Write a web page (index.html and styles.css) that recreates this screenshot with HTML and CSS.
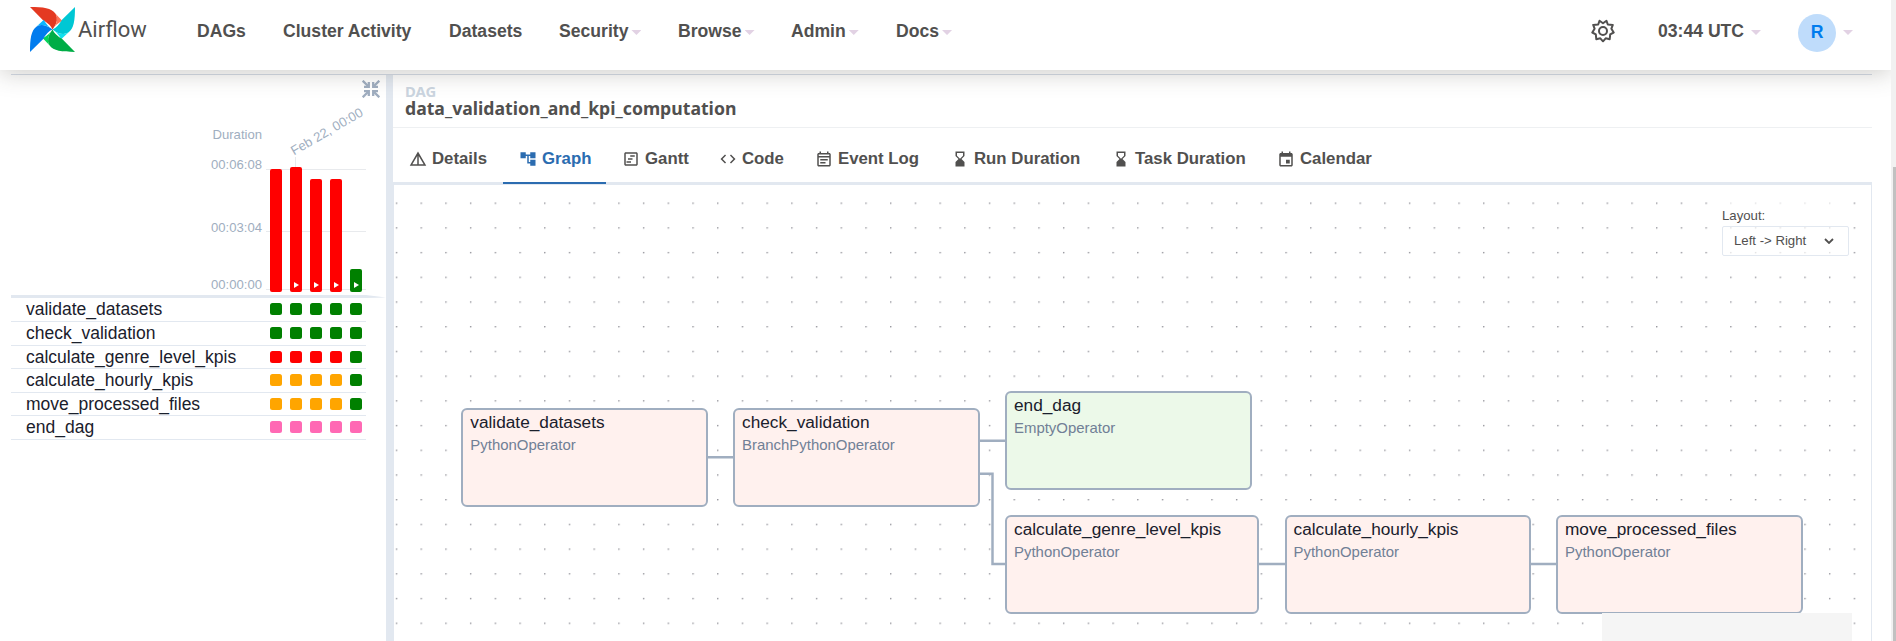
FILE: index.html
```html
<!DOCTYPE html>
<html lang="en">
<head>
<meta charset="utf-8">
<title>data_validation_and_kpi_computation - Airflow</title>
<link rel="stylesheet" href="styles.css">
</head>
<body>
<div class="page">
<header class="navbar">
  <a class="brand">
    <svg class="pinwheel" viewBox="0 0 44 44">
      <defs>
        <path id="blade" d="M0 0C13 0 21 1 25 6.500Q29 13 22 22Q20 17 12.500 12.700Z"/>
        <path id="fold" d="M25 6.500L31.500 13.500Q25 17 22 22Q29 13 25 6.500Z"/>
      </defs>
      <g fill="#e43921"><use href="#blade"/><use href="#fold" fill="#ff7557"/></g>
      <g fill="#00c7d4" transform="rotate(90 22 22)"><use href="#blade"/><use href="#fold" fill="#11e1ee"/></g>
      <g fill="#00ad46" transform="rotate(180 22 22)"><use href="#blade"/><use href="#fold" fill="#04d659"/></g>
      <g fill="#017cee" transform="rotate(270 22 22)"><use href="#blade"/><use href="#fold" fill="#0cb6ff"/></g>
    </svg>
    <span class="wordmark">Airflow</span>
  </a>
  <nav class="menu">
    <a class="m1">DAGs</a><a class="m2">Cluster Activity</a><a class="m3">Datasets</a>
    <a class="m4">Security<i class="caret"></i></a><a class="m5">Browse<i class="caret"></i></a><a class="m6">Admin<i class="caret"></i></a><a>Docs<i class="caret"></i></a>
  </nav>
  <div class="account">
    <svg class="gear" viewBox="0 0 24 24"><path d="M12 4.300L15.500 1.800L16.800 5.500L21.800 5.900L20.400 9.700L22.700 13.500L19.200 15.300L18.700 20.200L14.700 19.300L12 22.300L9.300 19.300L5.300 20.200L4.800 15.300L1.300 13.500L3.600 9.700L2.200 5.900L7.200 5.500L8.500 1.800Z"/><circle cx="12" cy="12" r="4"/></svg>
    <span class="clock">03:44 UTC</span><i class="caret"></i>
    <span class="avatar">R</span><i class="caret"></i>
  </div>
</header>
<main class="content">
  <section class="grid-panel">
    <div class="toolbar">
      <svg class="collapse" viewBox="0 0 18 18"><g fill="none" stroke="#a0aec0" stroke-width="2.300"><path d="M.700 .700L6.500 6.500M17.300 .700L11.500 6.500M.700 17.300L6.500 11.500M17.300 17.300L11.500 11.500"/><path d="M2 6.800H6.800V2M11.200 2V6.800H16M2 11.200H6.800V16M11.200 16V11.200H16"/></g></svg>
    </div>
    <div class="chart">
      <div class="axis"><span class="a0">Duration</span><span class="a1">00:06:08</span><span class="a2">00:03:04</span><span class="a3">00:00:00</span></div>
      <div class="bars">
        <span class="run-date">Feb 22, 00:00</span><i class="tick"></i>
        <i class="rule r1"></i><i class="rule r2"></i><i class="rule r3"></i>
        <div class="bar red" style="height:123px"></div>
        <div class="bar red manual" style="height:125px"></div>
        <div class="bar red manual" style="height:113px"></div>
        <div class="bar red manual" style="height:113px"></div>
        <div class="bar green manual" style="height:23px"></div>
      </div>
    </div>
    <svg class="edge" viewBox="0 0 375 3"><path d="M0 0H355L375 2.500L355 3H0Z"/></svg>
    <div class="task tall"><span>validate_datasets</span><i class="green"></i><i class="green"></i><i class="green"></i><i class="green"></i><i class="green"></i></div>
    <div class="task tall"><span>check_validation</span><i class="green"></i><i class="green"></i><i class="green"></i><i class="green"></i><i class="green"></i></div>
    <div class="task"><span>calculate_genre_level_kpis</span><i class="red"></i><i class="red"></i><i class="red"></i><i class="red"></i><i class="green"></i></div>
    <div class="task tall"><span>calculate_hourly_kpis</span><i class="orange"></i><i class="orange"></i><i class="orange"></i><i class="orange"></i><i class="green"></i></div>
    <div class="task"><span>move_processed_files</span><i class="orange"></i><i class="orange"></i><i class="orange"></i><i class="orange"></i><i class="green"></i></div>
    <div class="task tall"><span>end_dag</span><i class="pink"></i><i class="pink"></i><i class="pink"></i><i class="pink"></i><i class="pink"></i></div>
  </section>
  <div class="splitter"></div>
  <section class="details">
    <div class="heading"><div class="kind">DAG</div><h1>data_validation_and_kpi_computation</h1></div>
    <div class="tabs">
      <a class="t1"><svg viewBox="0 0 24 24"><path d="M12 2 1 21h22zm1 5.920L19.530 19H13v-3h-2v3H4.470L11 7.920V16h2z"/></svg>Details</a>
      <a class="t2 active"><svg viewBox="0 0 24 24"><path d="M22 11V3h-7v3H9V3H2v8h7V8h2v10h4v3h7v-8h-7v3h-2V8h2v3z"/></svg>Graph</a>
      <a class="t3"><svg viewBox="0 0 24 24"><path d="M19 5v14H5V5h14m0-2H5c-1.100 0-2 .9-2 2v14c0 1.100.9 2 2 2h14c1.100 0 2-.9 2-2V5c0-1.100-.9-2-2-2z"/><path d="M11 7h6v2h-6zM8 11h6v2H8zM6 15h6v2H6z"/></svg>Gantt</a>
      <a class="t4"><svg viewBox="0 0 24 24"><path d="M9.400 16.600 4.800 12l4.600-4.600L8 6l-6 6 6 6zm5.200 0 4.600-4.600-4.600-4.600L16 6l6 6-6 6z"/></svg>Code</a>
      <a class="t5"><svg viewBox="0 0 24 24"><path d="M19 4h-1V2h-2v2H8V2H6v2H5c-1.110 0-2 .9-2 2v14c0 1.100.89 2 2 2h14c1.100 0 2-.9 2-2V6c0-1.100-.9-2-2-2zm0 16H5V10h14zm0-12H5V6h14zM7 12h10v2H7zm0 4h7v2H7z"/></svg>Event Log</a>
      <a class="t6"><svg viewBox="0 0 24 24"><path d="m18 22-.010-6L14 12l3.990-4.010L18 2H6v6l4 4-4 3.990V22zM8 7.500V4h8v3.500l-4 4z"/></svg>Run Duration</a>
      <a class="t7"><svg viewBox="0 0 24 24"><path d="m18 22-.010-6L14 12l3.990-4.010L18 2H6v6l4 4-4 3.990V22zM8 7.500V4h8v3.500l-4 4z"/></svg>Task Duration</a>
      <a class="t8"><svg viewBox="0 0 24 24"><path d="M19 4h-1V2h-2v2H8V2H6v2H5c-1.110 0-1.990.9-1.990 2L3 20c0 1.100.89 2 2 2h14c1.100 0 2-.9 2-2V6c0-1.100-.9-2-2-2zm0 16H5V9h14zm-7-7h5v5h-5z"/></svg>Calendar</a>
    </div>
    <div class="graph">
      <svg class="canvas" width="1477" height="456">
        <defs><pattern id="dots" x="1.800" y="17.500" width="24.710" height="24.710" patternUnits="userSpaceOnUse"><circle cx=".8" cy=".8" r=".700" fill="#71717a"/></pattern></defs>
        <rect width="1477" height="456" fill="url(#dots)"/>
        <g fill="none" stroke="#a0aec0" stroke-width="2.470"><path d="M313 272.300H340M585 255.700H612M585 288.800H598.500V379H612M865 379H891M1136 379H1163"/></g>
      </svg>
      <div class="node n1"><b>validate_datasets</b><span>PythonOperator</span></div>
      <div class="node n2"><b>check_validation</b><span>BranchPythonOperator</span></div>
      <div class="node n3 empty"><b>end_dag</b><span>EmptyOperator</span></div>
      <div class="node n4"><b>calculate_genre_level_kpis</b><span>PythonOperator</span></div>
      <div class="node n5"><b>calculate_hourly_kpis</b><span>PythonOperator</span></div>
      <div class="node n6"><b>move_processed_files</b><span>PythonOperator</span></div>
      <div class="layout"><label>Layout:</label><div class="select">Left -&gt; Right<svg viewBox="0 0 10 6"><path d="M1 1l4 4 4-4"/></svg></div></div>
      <div class="minimap"></div>
    </div>
  </section>
</main>
</div>
<div class="scrollbar"><div class="thumb"></div></div>
</body>
</html>
```

FILE: styles.css
```css
* { box-sizing: border-box; }
body { margin: 0; height: 641px; overflow: hidden; display: flex; background: #fff; color: #51504f; font-family: "Liberation Sans", Arial, sans-serif; }
.page { width: 1891px; height: 641px; overflow: hidden; display: flex; flex-direction: column; }
.scrollbar { width: 5px; background: #f1f1f1; padding: 167px 0 0 2px; }
.thumb { height: 474px; background: #c1c1c1; }

.navbar { position: relative; z-index: 2; flex: none; height: 70px; background: #fff; display: flex; align-items: flex-start; box-shadow: 0 3px 22px rgba(60, 55, 45, .25); font-weight: bold; font-size: 17.6px; line-height: 20px; }
.brand { display: flex; width: 197px; padding: 7px 0 0 30px; }
.pinwheel { width: 45px; height: 45px; flex: none; }
.wordmark { font: 400 22px/26px Roboto, sans-serif; padding: 10px 0 0 3px; }
.menu { display: flex; padding-top: 21px; flex: 1; }
.menu a { display: flex; white-space: nowrap; }
.m1 { width: 86px; }
.m2 { width: 166px; }
.m3 { width: 110px; }
.m4 { width: 119px; }
.m5 { width: 113px; }
.m6 { width: 105px; }
.caret { flex: none; width: 10px; height: 5px; margin: 9px 0 0 3px; background: #e2d2e4; clip-path: polygon(0 0, 100% 0, 50% 100%); }
.account { display: flex; width: 300px; padding: 14px 0 0 0; }
.gear { width: 24px; height: 24px; margin: 5px 43px 0 0; fill: none; stroke: #51504f; stroke-width: 2; stroke-linejoin: round; }
.clock { padding-top: 7px; width: 90px; white-space: nowrap; }
.account .caret { margin: 16px 0 0 3px; }
.avatar { width: 38px; height: 38px; margin-left: 37px; border-radius: 50%; background: #bfdcfb; color: #017cee; text-align: center; line-height: 36px; }
.avatar + .caret { margin-left: 7px; }

.content { display: flex; width: 1861px; height: 567px; margin: 4px 0 0 11px; border-top: 1px solid #d6dde8; }
.grid-panel { width: 375px; flex: none; }
.toolbar { height: 35px; padding: 5px 0 0 351px; }
.collapse { width: 18px; height: 18px; display: block; }
.chart { display: flex; height: 184px; }
.axis { width: 251px; text-align: right; color: #a0aec0; font-size: 13.1px; line-height: 16px; display: flex; flex-direction: column; }
.a0 { margin-top: 17px; }
.a1 { margin-top: 14px; }
.a2 { margin-top: 47px; }
.a3 { margin-top: 41px; }
.bars { position: relative; width: 115px; padding: 0 0 2px 8px; display: flex; align-items: flex-end; gap: 8px; }
.bar { position: relative; width: 12px; border-radius: 2px; }
.manual::after { content: ""; position: absolute; left: 4px; bottom: 4px; width: 5px; height: 6px; background: #fff; clip-path: polygon(0 0, 100% 50%, 0 100%); }
.red { background: #f00; }
.green { background: #008000; }
.orange { background: #ffa500; }
.pink { background: #ff69b4; }
.rule { position: absolute; left: 4px; width: 100px; height: 1px; background: #e8eaed; }
.r1 { top: 59px; }
.r2 { top: 121px; }
.r3 { top: 179px; }
.tick { position: absolute; left: 33px; top: 47px; width: 1px; height: 12px; background: #e8eaed; }
.run-date { position: absolute; left: 34px; top: 33px; color: #a0aec0; font-size: 13.1px; line-height: 16px; white-space: nowrap; transform: rotate(-30deg); transform-origin: 0 100%; }
.edge { display: block; width: 375px; height: 3px; fill: #e2e8f0; margin-top: 1px; }
.task { display: flex; align-items: center; gap: 8px; width: 355px; height: 23px; border-bottom: 1px solid #e2e8f0; font-size: 17.5px; line-height: 20px; color: #1a202c; padding-left: 15px; }
.tall { height: 24px; padding-bottom: 1px; }
.task span { width: 236px; }
.task i { width: 12px; height: 12px; border-radius: 2.500px; }
.splitter { width: 7px; background: #e2e8f0; flex: none; }
.details { flex: 1; min-width: 0; display: flex; flex-direction: column; }
.heading { height: 53px; border-bottom: 1px solid #eef0f2; padding: 7px 0 0 12px; font-family: "Noto Sans", sans-serif; font-weight: bold; }
.kind { font-size: 14.8px; line-height: 18px; color: #cbd5e0; }
h1 { margin: 0; font-size: 17.65px; line-height: 17px; }
.tabs { display: flex; height: 57px; border-bottom: 3px solid #e2e8f0; font-size: 16.8px; font-weight: bold; }
.tabs a { display: flex; align-items: center; height: 56px; padding: 6px 0 0 16px; gap: 5px; white-space: nowrap; flex: none; }
.tabs svg { width: 18px; height: 18px; fill: currentColor; }
.t1 { width: 110px; }
.t2 { width: 103px; }
.t3 { width: 97px; }
.t4 { width: 96px; }
.t5 { width: 136px; }
.t6 { width: 161px; }
.t7 { width: 165px; }
.tabs .active { color: #2b6cb0; border-bottom: 2px solid #2b6cb0; padding-top: 8px; }
.graph { position: relative; height: 456px; border: solid #e2e8f0; border-width: 0 1px; overflow: hidden; }
.canvas { display: block; }
.node { position: absolute; width: 246.500px; height: 98.600px; border: 2px solid #a0aec0; border-radius: 6px; background: #fff1ee; padding: 2px 0 0 7px; }
.node b { display: block; font-weight: 400; font-size: 17.25px; line-height: 20px; color: #1a202c; }
.node span { display: block; font-size: 14.95px; line-height: 18px; margin-top: 4px; color: #718096; }
.empty { background: #ecf9e9; }
.n1 { left: 67.300px; top: 223px; }
.n2 { left: 339px; top: 223px; }
.n3 { left: 611px; top: 206.400px; }
.n4 { left: 611px; top: 330px; width: 254.300px; }
.n5 { left: 890.500px; top: 330px; }
.n6 { left: 1162px; top: 330px; }
.layout { position: absolute; left: 1322px; top: 15px; width: 137px; padding: 7px 5px 7px 6px; background: rgba(255, 255, 255, .7); font-size: 13.2px; line-height: 18px; }
.layout label { display: block; }
.select { width: 127px; height: 30px; margin-top: 1px; border: 1px solid #e2e8f0; border-radius: 2px; padding: 0 14px 0 11px; display: flex; justify-content: space-between; align-items: center; }
.select svg { width: 10px; height: 6px; fill: none; stroke: #51504f; stroke-width: 1.800; }
.minimap { position: absolute; left: 1208px; top: 428px; width: 250px; height: 28px; background: #f5f5f5; }
```
